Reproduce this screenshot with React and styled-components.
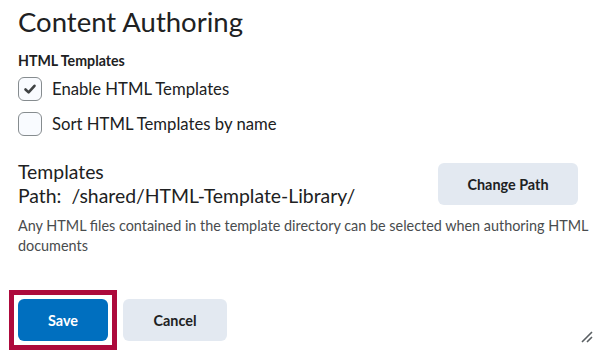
import React from 'react';
import styled, { createGlobalStyle } from 'styled-components';

const GlobalStyle = createGlobalStyle`
  html, body {
    margin: 0;
    padding: 0;
    background: #ffffff;
  }
  body {
    font-family: 'Lato', 'Liberation Sans', sans-serif;
    color: #202122;
  }
`;

const Page = styled.div`
  position: relative;
  width: 602px;
  height: 359px;
  box-sizing: border-box;
  padding: 0 6px 0 18px;
  overflow: hidden;
`;

const Title = styled.h1`
  margin: 4px 0 0;
  font-size: 27.5px;
  line-height: 36px;
  font-weight: 400;
  color: #202122;
`;

const SectionLabel = styled.div`
  margin-top: 12px;
  font-size: 14.2px;
  line-height: 18px;
  font-weight: 700;
  color: #202122;
`;

const CheckList = styled.div`
  display: flex;
  flex-direction: column;
  gap: 11px;
  margin-top: 7px;
`;

const CheckRow = styled.label`
  display: flex;
  align-items: center;
  gap: 10px;
  font-size: 16.7px;
  line-height: 24px;
  color: #202122;
`;

const Box = styled.span`
  display: flex;
  align-items: center;
  justify-content: center;
  width: 24px;
  height: 24px;
  box-sizing: border-box;
  border: 1px solid #868c8f;
  border-radius: 6px;
  background: #f9fbff;
`;

const TemplatesRow = styled.div`
  display: flex;
  align-items: center;
  justify-content: space-between;
  margin-top: 24px;
  padding-right: 18px;
`;

const PathInfo = styled.div`
  font-size: 19.4px;
  line-height: 24px;
  color: #202122;
`;

const Button = styled.button`
  height: 42px;
  padding: 0;
  width: ${p => p.$w}px;
  border: none;
  border-radius: 6px;
  font-family: 'Lato', 'Liberation Sans', sans-serif;
  font-size: 14.4px;
  font-weight: 700;
  cursor: pointer;
  background: ${p => (p.$primary ? '#006fbf' : '#e3e9f1')};
  color: ${p => (p.$primary ? '#ffffff' : '#202122')};
`;

const Description = styled.p`
  margin: 8px 0 0;
  font-size: 14.4px;
  line-height: 19.5px;
  color: #494c4e;
`;

const Actions = styled.div`
  display: flex;
  align-items: center;
  gap: 6px;
  margin-top: 35px;
  margin-left: -9px;
`;

const FocusRing = styled.div`
  padding: 4px;
  border: 5px solid #ad0a3c;
`;

const Grip = styled.svg`
  position: absolute;
  right: 9px;
  bottom: 16px;
`;

function CheckMark() {
  return (
    <svg width="14" height="14" viewBox="0 0 14 14">
      <path d="M2.5 7.5 L5.6 10.4 L11.5 3.8" fill="none" stroke="#3f4244" strokeWidth="2.6" strokeLinecap="round" strokeLinejoin="round" />
    </svg>
  );
}

function Checkbox({ checked, children }) {
  return (
    <CheckRow>
      <Box>{checked && <CheckMark />}</Box>
      {children}
    </CheckRow>
  );
}

export default function App() {
  return (
    <Page>
      <GlobalStyle />
      <Title>Content Authoring</Title>
      <SectionLabel>HTML Templates</SectionLabel>
      <CheckList>
        <Checkbox checked>Enable HTML Templates</Checkbox>
        <Checkbox>Sort HTML Templates by name</Checkbox>
      </CheckList>
      <TemplatesRow>
        <PathInfo>
          <div>Templates</div>
          <div>Path:&nbsp; /shared/HTML-Template-Library/</div>
        </PathInfo>
        <Button $w={140}>Change Path</Button>
      </TemplatesRow>
      <Description>
        Any HTML files contained in the template directory can be selected when authoring HTML documents
      </Description>
      <Actions>
        <FocusRing>
          <Button $primary $w={90}>Save</Button>
        </FocusRing>
        <Button $w={104}>Cancel</Button>
      </Actions>
      <Grip width="12" height="12" viewBox="0 0 12 12">
        <path d="M1 11 L11 1 M6 11 L11 6" stroke="#5a5f63" strokeWidth="1.6" />
      </Grip>
    </Page>
  );
}
